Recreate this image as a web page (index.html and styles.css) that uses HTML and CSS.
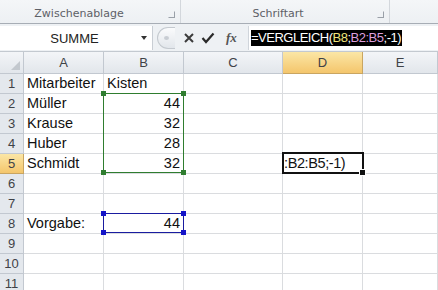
FILE: index.html
```html
<!DOCTYPE html>
<html lang="de">
  <head>
    <meta charset="UTF-8" />
    <title>Excel - VERGLEICH</title>
    <link rel="stylesheet" href="styles.css">
  </head>
  <body>
    <!-- Ribbon group labels -->
    <div class="ribbon">
      <div class="group g1">
        <span class="label">Zwischenablage</span>
        <i class="launch"></i>
      </div>
      <div class="group g2">
        <span class="label">Schriftart</span>
        <i class="launch"></i>
      </div>
      <div class="group g3"></div>
    </div>

    <!-- Formula bar -->
    <div class="fbar">
      <div class="namebox">
        <span class="name">SUMME</span>
        <span class="drop"></span>
      </div>
      <div class="grip"><span></span></div>
      <div class="btns">
        <svg width="12" height="12" viewBox="0 0 12 12">
          <path d="M2 2 L10 10 M10 2 L2 10" stroke="#3c3c3c" stroke-width="2" />
        </svg>
        <svg width="14" height="12" viewBox="0 0 14 12">
          <path d="M1.5 6 L5 10 L12.5 1.5" stroke="#2a2a2a" stroke-width="2.2" fill="none" />
        </svg>
        <span class="fx">fx</span>
      </div>
      <div class="formula">
        <span class="sel">=VERGLEICH(<span class="r1">B8</span>;<span class="r2">B2:B5</span>;-1)</span>
      </div>
    </div>

    <!-- Sheet -->
    <div class="sheet">
      <div class="grid">
        <div class="hd corner"></div>
        <div class="hd col">A</div>
        <div class="hd col">B</div>
        <div class="hd col">C</div>
        <div class="hd col active">D</div>
        <div class="hd col">E</div>

        <div class="hd row">1</div>
        <div class="c">Mitarbeiter</div>
        <div class="c">Kisten</div>
        <div class="c"></div><div class="c"></div><div class="c"></div>

        <div class="hd row">2</div>
        <div class="c">Müller</div>
        <div class="c num">44</div>
        <div class="c"></div><div class="c"></div><div class="c"></div>

        <div class="hd row">3</div>
        <div class="c">Krause</div>
        <div class="c num">32</div>
        <div class="c"></div><div class="c"></div><div class="c"></div>

        <div class="hd row">4</div>
        <div class="c">Huber</div>
        <div class="c num">28</div>
        <div class="c"></div><div class="c"></div><div class="c"></div>

        <div class="hd row active">5</div>
        <div class="c">Schmidt</div>
        <div class="c num">32</div>
        <div class="c"></div>
        <div class="c edit">:B2:B5;-1)</div>
        <div class="c"></div>

        <div class="hd row">6</div>
        <div class="c"></div><div class="c"></div><div class="c"></div><div class="c"></div><div class="c"></div>

        <div class="hd row">7</div>
        <div class="c"></div><div class="c"></div><div class="c"></div><div class="c"></div><div class="c"></div>

        <div class="hd row">8</div>
        <div class="c">Vorgabe:</div>
        <div class="c num">44</div>
        <div class="c"></div><div class="c"></div><div class="c"></div>

        <div class="hd row">9</div>
        <div class="c"></div><div class="c"></div><div class="c"></div><div class="c"></div><div class="c"></div>

        <div class="hd row">10</div>
        <div class="c"></div><div class="c"></div><div class="c"></div><div class="c"></div><div class="c"></div>

        <div class="hd row">11</div>
        <div class="c"></div><div class="c"></div><div class="c"></div><div class="c"></div><div class="c"></div>
      </div>

      <!-- range highlights -->
      <div class="range green">
        <i class="h tl"></i><i class="h tr"></i><i class="h bl"></i><i class="h br"></i>
      </div>
      <div class="range blue">
        <i class="h tl"></i><i class="h tr"></i><i class="h bl"></i><i class="h br"></i>
      </div>
      <div class="cursor"><i class="fill"></i></div>
    </div>
  </body>
</html>
```

FILE: styles.css
```css
body {
  margin: 0;
  width: 438px;
  height: 290px;
  overflow: hidden;
  background: white;
  font-family: "Liberation Sans", Arial, sans-serif;
}

/* ribbon */
.ribbon {
  display: flex;
  height: 23px;
  background: linear-gradient(#f4f6f8, #edf0f3);
  border-bottom: 1px solid #a7adb5;
}

.group {
  position: relative;
  display: flex;
  justify-content: center;
  align-items: flex-end;
  padding-bottom: 3px;
  box-sizing: border-box;
  border-right: 1px solid #d3d7dc;
}

.g1 { width: 181px; }
.g2 { width: 209px; }
.g3 { flex: 1; border-right: none; }

.label {
  font-family: "DejaVu Sans", sans-serif;
  font-size: 11px;
  color: #5d6066;
  margin-left: -22px;
}

.g2 .label { margin-left: -14px; }

.launch {
  position: absolute;
  right: 5px;
  bottom: 5px;
  width: 5px;
  height: 5px;
  border: 1px solid #9aa0a8;
  border-left-color: transparent;
  border-top-color: transparent;
}

/* formula bar */
.fbar {
  display: flex;
  align-items: center;
  height: 26px;
  background: #eef1f4;
  border-bottom: 1px solid #c3c9d0;
  padding-top: 1px;
}

.namebox {
  display: flex;
  align-items: center;
  width: 153px;
  height: 24px;
  background: white;
  border-right: 1px solid #c9ced4;
  box-sizing: border-box;
}

.name {
  flex: 1;
  text-align: center;
  font-size: 13px;
  color: #222;
  padding-left: 8px;
}

.drop {
  width: 0;
  height: 0;
  border-left: 3px solid transparent;
  border-right: 3px solid transparent;
  border-top: 4px solid #333;
  margin-right: 5px;
}

.grip {
  display: flex;
  align-items: center;
  justify-content: center;
  width: 18px;
  height: 22px;
  margin-left: 4px;
  border: 1px solid #c4c9cf;
  border-right: none;
  border-radius: 11px 0 0 11px;
  background: linear-gradient(#fafbfc, #e2e6eb);
  box-sizing: border-box;
}

.grip span {
  width: 5px;
  height: 4px;
  border-radius: 50%;
  background: #c8cdd3;
}

.btns {
  display: flex;
  align-items: center;
  gap: 6px;
  padding-left: 8px;
  width: 74px;
  height: 24px;
  box-sizing: border-box;
  background: #eef1f4;
  border-right: 1px solid #d0d5db;
}

.fx {
  font-family: "Liberation Serif", serif;
  font-style: italic;
  font-weight: bold;
  font-size: 13px;
  color: #555;
  margin-left: 5px;
}

.formula {
  flex: 1;
  height: 24px;
  background: white;
  display: flex;
  align-items: center;
  padding-left: 2px;
}

.sel {
  background: black;
  color: white;
  font-size: 13px;
  line-height: 16px;
  letter-spacing: -0.5px;
  padding-right: 1px;
}

.r1 { color: #efe37a; }
.r2 { color: #dc9fdc; }

/* sheet */
.sheet {
  position: relative;
}

.grid {
  display: grid;
  grid-template-columns: 24px 80px 80px 99px 80px 1fr;
  grid-template-rows: 22px;
  grid-auto-rows: 20px;
}

.c,
.hd {
  box-sizing: border-box;
  border-right: 1px solid #dadcdf;
  border-bottom: 1px solid #dadcdf;
  font-size: 14.5px;
  line-height: 19px;
  color: #111;
  white-space: nowrap;
}

.c {
  padding-left: 3px;
}

.num {
  text-align: right;
  padding-right: 3px;
}

.edit {
  padding-left: 1px;
  letter-spacing: -0.4px;
  overflow: visible;
}

.hd {
  background: linear-gradient(#f3f5f8, #e2e6eb);
  border-color: #c2c8d0;
  color: #3f4247;
  font-size: 13px;
  text-align: center;
}

.hd.col {
  line-height: 21px;
}

.hd.row {
  background: #e4e8ed;
}

.hd.active {
  background: linear-gradient(#fbe6a6, #f4c66c);
  border-color: #c9a561;
}

.corner {
  position: relative;
}

.corner::after {
  content: "";
  position: absolute;
  right: 3px;
  bottom: 3px;
  border-left: 9px solid transparent;
  border-bottom: 9px solid #c3c8ce;
}

/* overlays */
.range {
  position: absolute;
  box-sizing: border-box;
  left: 103px;
  width: 81px;
}

.range.green {
  top: 41px;
  height: 80px;
  border: 1px solid #2f7d2f;
}

.range.blue {
  top: 161px;
  height: 20px;
  border: 1px solid #1a1ca0;
}

.h {
  position: absolute;
  width: 5px;
  height: 5px;
}

.green .h { background: #2f7d2f; }
.blue .h { background: #1414c8; }

.tl { left: -3px; top: -3px; }
.tr { right: -3px; top: -3px; }
.bl { left: -3px; bottom: -3px; }
.br { right: -3px; bottom: -3px; }

.cursor {
  position: absolute;
  box-sizing: border-box;
  left: 282px;
  top: 100px;
  width: 82px;
  height: 22px;
  border: 2px solid #111;
}

.fill {
  position: absolute;
  right: -4px;
  bottom: -4px;
  width: 5px;
  height: 5px;
  background: #111;
  border: 1px solid white;
}
```
